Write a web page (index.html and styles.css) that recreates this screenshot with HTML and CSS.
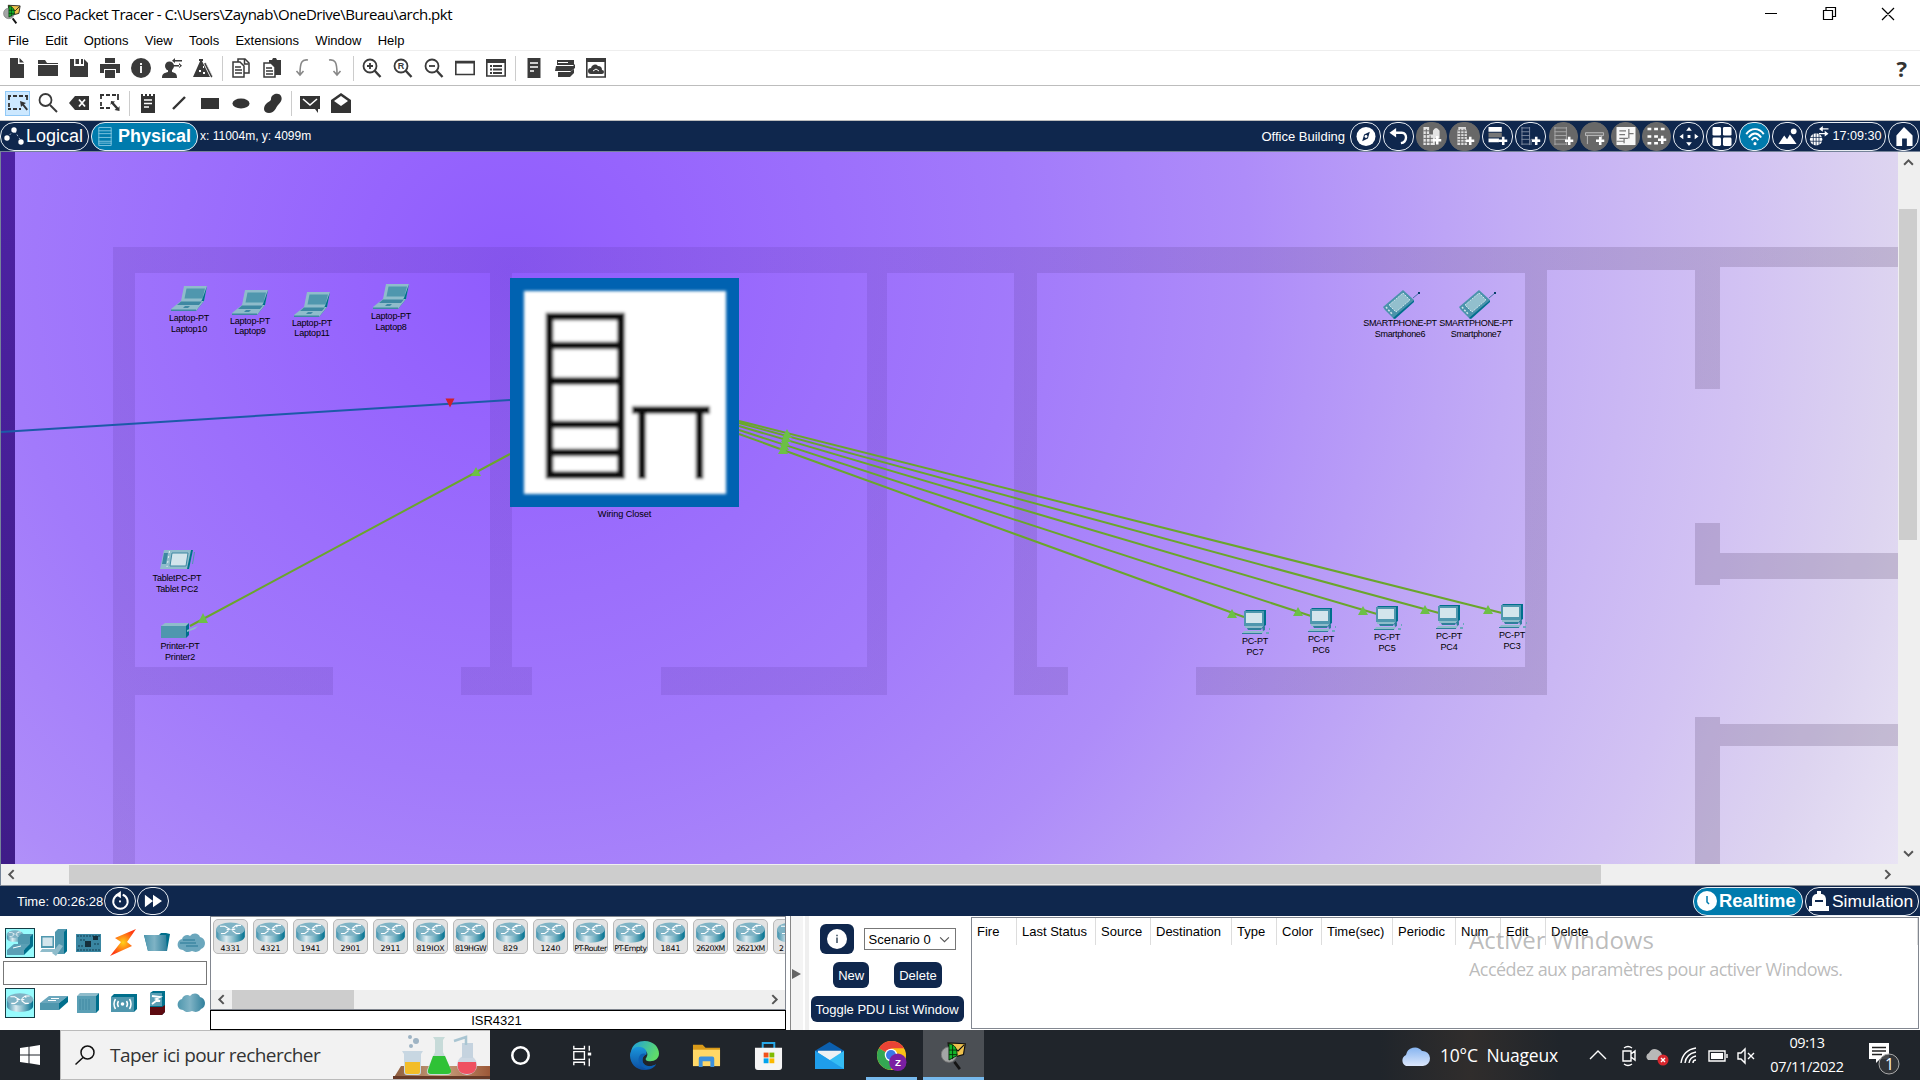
FILE: index.html
```
<!DOCTYPE html>
<html lang="fr">
<head>
<meta charset="utf-8">
<title>Cisco Packet Tracer</title>
<link rel="stylesheet" href="styles.css">
</head>
<body>
<svg class="sprite" aria-hidden="true">
  <defs>
    <linearGradient id="teal" x1="0" y1="0" x2="1" y2="0"><stop offset="0" stop-color="#4f97ae"/><stop offset=".45" stop-color="#7fb3c5"/><stop offset="1" stop-color="#2f7f9b"/></linearGradient>
    <linearGradient id="drum" x1="0" x2="1"><stop offset="0" stop-color="#3d8fab"/><stop offset=".35" stop-color="#dcebf0"/><stop offset="1" stop-color="#00708f"/></linearGradient>
    <linearGradient id="edgeA" x1="0" y1="0" x2="1" y2=".4"><stop offset="0" stop-color="#1b9de2"/><stop offset="1" stop-color="#5fdc6a"/></linearGradient>
    <linearGradient id="edgeB" x1="0" y1="0" x2="0" y2="1"><stop offset="0" stop-color="#1a96dc"/><stop offset="1" stop-color="#0c4da0"/></linearGradient>
    <linearGradient id="cloudy" x1="0" y1="0" x2="0" y2="1"><stop offset="0" stop-color="#86b4f0"/><stop offset="1" stop-color="#dce7fb"/></linearGradient>
    <linearGradient id="shade" x1="0" x2="1"><stop offset="0" stop-color="#3c1e78" stop-opacity=".13"/><stop offset=".4" stop-color="#3c1e78" stop-opacity=".12"/><stop offset=".75" stop-color="#46325a" stop-opacity=".18"/><stop offset="1" stop-color="#46325a" stop-opacity=".2"/></linearGradient>
    <linearGradient id="strip" x1="0" y1="0" x2="0" y2="1"><stop offset="0" stop-color="#4d22a4"/><stop offset="1" stop-color="#3f1c88"/></linearGradient>
    <radialGradient id="spark"><stop offset="0" stop-color="#ffd21a"/><stop offset="1" stop-color="#ff3b12"/></radialGradient>
    <radialGradient id="floor" gradientUnits="userSpaceOnUse" cx="510" cy="120" r="1540">
      <stop offset="0" stop-color="#8f5cfd"/><stop offset=".1" stop-color="#9664fd"/><stop offset=".33" stop-color="#a27afb"/><stop offset=".48" stop-color="#ae8cf9"/><stop offset=".65" stop-color="#c2acf5"/><stop offset=".8" stop-color="#d2c2f3"/><stop offset=".9" stop-color="#ddd4f0"/><stop offset="1" stop-color="#ece8f5"/>
    </radialGradient>
    <filter id="soft" x="-5%" y="-5%" width="110%" height="110%"><feGaussianBlur stdDeviation="1.700"/></filter>
  </defs>
  <symbol id="laptop" viewBox="0 0 36 25">
    <path d="M13 0H36L33 15H10z" fill="#8fbccb"/><path d="M15.500 2.500H34L31.500 12.500H13.500z" fill="#4f97ae"/><path d="M36 0l-3 15-8 10-1-1.500L31 14z" fill="#006f8c"/>
    <path d="M10 15H33L25 25H0v-2z" fill="#8fbccb"/><path d="M10 15.500H31l-3 3.500H6z" fill="#3e88a2"/><path d="M14 20h5l-2 2h-5zM0 23.500h25V25H0z" fill="#3e88a2"/>
  </symbol>
  <symbol id="pc" viewBox="0 0 28 24">
    <path d="M2 2L4 0H24V15l-3 2z" fill="#006f8c"/><path d="M2 1H22V16H2z" fill="#4f97ae"/><path d="M4 3H20V13H4z" fill="#d3e5ec"/><path d="M3 16h18v2H3z" fill="#8fbccb"/><path d="M5 18h15l-1 2H6zM20 17l3-1v4l-2 1z" fill="#2f7f9b"/><path d="M2 21h20l-2 3H0z" fill="#8fbccb"/><path d="M0 23h20v1H0z" fill="#2f7f9b"/><path d="M24 22h3v2h-3zM27 18h1v2h-1z" fill="#6ba7bd"/>
  </symbol>
  <symbol id="phone" viewBox="0 0 37 29">
    <path d="M30 8L36 3" stroke="#175a86" stroke-width=".7"/><path d="M35 2h2v2h-2z" fill="#073f6c"/>
    <path d="M0 17L20 0l11 10-20 19-9-9z" fill="#4a93ab"/><path d="M31 10v2L12 29l-2-1z" fill="#006f8c"/><path d="M6 15L20 3l7 7L13 22z" fill="#92bfcd" stroke="#e4f2f5" stroke-width=".8" stroke-dasharray="2 1"/><path d="M3 17l6 7" stroke="#d3e5ec" stroke-width="1.500" stroke-dasharray="2 1.500"/>
  </symbol>
  <symbol id="tablet" viewBox="0 0 35 19">
    <path d="M4 0H33L29 19H0z" fill="#8fbccb"/><path d="M33 0l-4 19h-2L31 0z" fill="#006f8c"/><path d="M12 3H28L26 16H10z" fill="#d3e5ec" stroke="#3e88a2"/><path d="M4 3h4L6 14H2z" fill="#3e88a2"/><path d="M9.500 1L7 17" stroke="#e8f5f8" stroke-dasharray="2 3"/><path d="M34.500 2l-2 12" stroke="#4f97ae"/>
  </symbol>
  <symbol id="printer" viewBox="0 0 38 15">
    <path d="M0 3L4 0H28L25 3z" fill="#8fbccb"/><path d="M0 3H25V15H0z" fill="#4f97ae"/><path d="M25 3l3-3v12l-3 3z" fill="#006f8c"/><path d="M26 7l11-4-3 3-8 3z" fill="#8fbccb"/>
  </symbol>
  <symbol id="router" viewBox="0 0 32 22">
    <path d="M1 7V15C1 24 31 24 31 15V7z" fill="url(#drum)"/><ellipse cx="16" cy="7.500" rx="15" ry="7" fill="#7fb3c5"/><path d="M5 4.500h5l5 3-3 .5M18 6.500l4-3h5M22 3.500l1 2M14 9l-4 3H6M18 9l4 3h4M17 8l4-.500" stroke="#fff" stroke-width="1.200" fill="none"/>
  </symbol>
  <symbol id="ptlogo" viewBox="0 0 28 32">
    <path d="M8 2L27 3 25 15 10 19z" fill="#eec14d" stroke="#111" stroke-width="1.300"/><path d="M9 3l10 8 7-7" fill="none" stroke="#111" stroke-width="1.300"/><circle cx="9" cy="15" r="8.500" fill="#a3a5a5" stroke="#777"/><path d="M9 3c6 1 9 4 9 13l-9 5z" fill="#12b52a" stroke="#062a08" stroke-width="1"/><path d="M13 4v16M9 10h9M9 15h9" stroke="#052d09"/><path d="M15 23L21 31" stroke="#141414" stroke-width="3"/>
  </symbol>
  <symbol id="plus" viewBox="0 0 10 10"><path d="M3.500 0h3v3.500H10v3H6.500V10h-3V6.500H0v-3h3.500z"/></symbol>
  <symbol id="zoom" viewBox="0 0 20 20"><circle cx="8" cy="8" r="6.500" fill="none" stroke="currentColor" stroke-width="1.800"/><path d="M12.500 12.500L18.500 19" stroke="currentColor" stroke-width="2.400"/></symbol>
</svg>

<header class="titlebar">
  <svg class="applogo"><use href="#ptlogo"/></svg>
  <span class="title">Cisco Packet Tracer - C:\Users\Zaynab\OneDrive\Bureau\arch.pkt</span>
  <svg class="winctl" viewBox="0 0 160 28"><g fill="none" stroke="#000" stroke-width="1.200"><path d="M5 13.500h12M63.500 10.500h9v9h-9zM66 10V7.500h9.500v9H73M122 8l12 12M134 8l-12 12"/></g></svg>
</header>
<nav class="menubar"><span>File</span><span>Edit</span><span>Options</span><span>View</span><span>Tools</span><span>Extensions</span><span>Window</span><span>Help</span></nav>

<div class="toolbar">
  <svg viewBox="0 0 20 20"><path d="M3 0h8v6h6v14H3zM12.500 0L17 4.500h-4.500z"/></svg>
  <svg viewBox="0 0 20 20"><path d="M0 3V2h7l2 3h11v1H0zM0 7h20v11H0z"/></svg>
  <svg viewBox="0 0 20 20"><path d="M1 1h4v7h10V1l4 4v14H1zM6.500 1H10v5H6.500zM12 1h2v5h-2z"/></svg>
  <svg viewBox="0 0 20 20"><path d="M5 0h10v5H5zM0 6h20v9h-4v-4H4v4H0zM5 12h10v8H5z"/></svg>
  <svg viewBox="0 0 20 20"><circle cx="10" cy="10" r="10"/><path d="M9 8h2v7H9zM9 5h2v2H9z" fill="#eee"/></svg>
  <svg viewBox="0 0 20 20"><circle cx="7.500" cy="8" r="4.500"/><path d="M0 20c0-5 3-5 6-6v-3h4v3c3 1 5 1 5 6zM11 2h9v1.500h-9zM13 0v5l-3-2.200zM11 7h7v1.500h-7zM17 5v5l3-2.200z"/></svg>
  <svg viewBox="0 0 20 20"><path d="M8 1l9 18H0zM6 1h4v2H6z"/><path d="M12 5l7 14" stroke="#3a3a3a" stroke-width="2"/><path d="M12 3l8 16" stroke="#fff" stroke-width=".8"/><path d="M6 12h2v2H6zM10 8h1v2h-1zM10 14h2v2h-2z" fill="#fff"/></svg>
  <i class="sep"></i>
  <svg viewBox="0 0 20 20"><g fill="#fff" stroke="#3a3a3a" stroke-width="1.500"><path d="M7 1h7l4 4v10H7z"/><path d="M2 4h7l4 4v11H2z"/></g><path d="M4 9h6M4 12h7M4 15h7M13.500 1v5h4" stroke="#3a3a3a" stroke-width="1.500" fill="none"/></svg>
  <svg viewBox="0 0 20 20"><path d="M7 2h3l1-2h3l1 2h4v15H7z"/><path d="M2 5h7l4 4v10H2z" fill="#fff" stroke="#3a3a3a" stroke-width="1.500"/><path d="M4 10h6M4 13h7M4 16h7" stroke="#3a3a3a" stroke-width="1.500"/></svg>
  <svg viewBox="0 0 20 20"><path d="M15 2C9 1 7 4 7 16M3.500 13L7 17l3.500-4" fill="none" stroke="#888" stroke-width="1.600"/></svg>
  <svg viewBox="0 0 20 20"><path d="M5 2c6-1 8 2 8 14M9.500 13l3.500 4 3.500-4" fill="none" stroke="#888" stroke-width="1.600"/></svg>
  <i class="sep"></i>
  <svg viewBox="0 0 20 20"><use href="#zoom"/><path d="M8 5v6M5 8h6" stroke="#3a3a3a" stroke-width="1.800"/></svg>
  <svg viewBox="0 0 20 20"><use href="#zoom"/><text x="4.800" y="11.200" class="tiny-r">R</text></svg>
  <svg viewBox="0 0 20 20"><use href="#zoom"/><path d="M5 8h6" stroke="#3a3a3a" stroke-width="1.800"/></svg>
  <svg viewBox="0 0 20 20"><path d="M.8 3.500h18.400v13H.8z" fill="none" stroke="#3a3a3a" stroke-width="1.600"/><path d="M0 3h20v2.500H0z"/></svg>
  <svg viewBox="0 0 20 20"><path d="M.8 2h18.400v16H.8z" fill="none" stroke="#3a3a3a" stroke-width="1.600"/><path d="M0 1h20v4H0zM4 7h2v2H4zM7 7h9v2H7zM4 10.500h2v2H4zM7 10.500h9v2H7zM4 14h2v2H4zM7 14h9v2H7z"/></svg>
  <i class="sep"></i>
  <svg viewBox="0 0 20 20"><path d="M3.500 0h13v20h-13z"/><path d="M6 5h8M6 9h8M6 13h4" stroke="#fff" stroke-width="1.600"/></svg>
  <svg viewBox="0 0 20 20"><path d="M2 2h17v5H2zM1 8l3 0h14l2-2v4l-4 3H0zM3 14h12l4-3v4l-4 4H3z"/><path d="M3 4.500h10" stroke="#fff"/></svg>
  <svg viewBox="0 0 20 20"><path d="M.8 1h18.400v18H.8z" fill="none" stroke="#3a3a3a" stroke-width="1.600"/><path d="M0 0h20v4H0zM5 16a3 3 0 0 1 0-6 4 4 0 0 1 7-2 4 4 0 0 1 4 4 2 2 0 0 1 0 4z"/><path d="M7 13l3-2 3 2" stroke="#fff" fill="none"/></svg>
  <span class="help">?</span>
</div>
<div class="toolbar second">
  <span class="picked"><svg viewBox="0 0 20 20"><path d="M0 3h3M5 3h4M11 3h4M17 3h3M1 3v4M1 10v4M0 16h3M5 16h4M11 16h2M19 3v4" stroke="#333" stroke-width="1.800"/><path d="M12 8l6 2-2 1.200 4 5-1.500 1.300-4-5-1.500 1.500z"/></svg></span>
  <svg viewBox="0 0 20 20"><circle cx="7.500" cy="7" r="6" fill="none" stroke="#3a3a3a" stroke-width="1.800"/><path d="M12 12l7 7" stroke="#3a3a3a" stroke-width="2"/></svg>
  <svg viewBox="0 0 20 20"><path d="M0 10l6-7h14v14H6z"/><path d="M10 6.500l6 7M16 6.500l-6 7" stroke="#fff" stroke-width="1.800"/></svg>
  <svg viewBox="0 0 20 20"><path d="M0 2h4M6 2h4M12 2h4M1 2v4M1 9v4M0 15h4M6 15h4M18 1v6" stroke="#333" stroke-width="1.800"/><path d="M11 8l4 .5-1.200 1.200 4.500 5L19.500 13v5l-5-1 1.500-1.300-4.500-5-1 1.300z"/></svg>
  <i class="sep"></i>
  <svg viewBox="0 0 20 20"><path d="M3 1h2v2h2V1h2v2h2V1h2v2h2V1h2v19H3z"/><path d="M6 7h8M6 10.500h8M6 14h5" stroke="#fff" stroke-width="1.500"/></svg>
  <svg viewBox="0 0 20 20"><path d="M4 16L16 4" stroke="#333" stroke-width="2.400"/></svg>
  <svg viewBox="0 0 20 20"><path d="M1 5h18v11H1z"/></svg>
  <svg viewBox="0 0 20 20"><ellipse cx="10" cy="10.500" rx="8.500" ry="5"/></svg>
  <svg viewBox="0 0 20 20"><path d="M9 6c0-5 8-7 10-3s-1 7-3 9-3 8-9 8-6-6-3-9 5-3 5-5z"/></svg>
  <i class="sep"></i>
  <svg viewBox="0 0 20 20"><path d="M0 3h20v13h-2v4l-3-4H0z"/><path d="M3 6l7 6 7-6" stroke="#fff" stroke-width="1.600" fill="none"/></svg>
  <svg viewBox="0 0 20 20"><path d="M0 7l10-7 10 7v13H0z"/><path d="M3 8l7-5 7 5-7 5z" fill="#fff"/></svg>
</div>

<div class="navbar">
  <div class="pill logical"><svg viewBox="0 0 20 20"><path d="M3 12L10 4l7 11" stroke="#9fb0c8" stroke-dasharray="2 2" fill="none"/><g fill="#fff"><circle cx="3" cy="12" r="2.700"/><circle cx="10" cy="4" r="2.700"/><circle cx="17" cy="16" r="2.700"/></g></svg>Logical</div>
  <div class="pill physical"><svg viewBox="0 0 14 20"><path d="M.5.5h13v19H.5zM0 4h14M0 7h14M0 11h14M0 15h14M0 17h14" fill="none" stroke="#7fc4de"/></svg>Physical</div>
  <span class="coords">x: 11004m, y: 4099m</span>
  <span class="place">Office Building</span>
  <div class="rounds">
    <b><svg viewBox="0 0 20 20"><circle cx="10" cy="10" r="10"/><path d="M14 5l-2 7-6 3 2-7z" fill="#0f274d"/><circle cx="10" cy="10" r="1.500"/></svg></b>
    <b><svg viewBox="0 0 20 20"><path d="M4 6h9c6 0 6 10-1 11" fill="none" stroke="#fff" stroke-width="2.500"/><path d="M0 6l7-5v10z"/></svg></b>
    <b class="off"><svg viewBox="0 0 20 20"><path d="M1 0h6v8h4V4q3-6 7 0v8h-5v7H1z" fill="#e4e4e4"/><path d="M1 4h6M1 8h6M1 12h10M1 16h10M4 2v17M8 9v10" stroke="#666" stroke-width="1"/><use href="#plus" x="11" y="9" width="9" height="10"/></svg></b>
    <b class="off"><svg viewBox="0 0 20 20"><path d="M3 0h8v3h1v16H2V3h1z" fill="#ddd"/><path d="M2 4h10M2 7h10M2 10h10M2 13h10M2 16h10M5.500 2v17M9 2v17" stroke="#666"/><use href="#plus" x="11" y="10" width="9" height="9"/></svg></b>
    <b><svg viewBox="0 0 20 20"><path d="M0 0h14v5H0zM0 12h11v4H0z"/><path d="M0 6h14v5H0z" fill="#777"/><use href="#plus" x="11" y="10" width="9" height="9"/></svg></b>
    <b><svg viewBox="0 0 20 20"><path d="M.5 0v19M8.500 0v19M0 1h9M0 5h9M0 9h9M0 13h9M0 18h9M10 13h9M10 13v6" stroke="#7d8aa0" fill="none"/><use href="#plus" x="11" y="10" width="9" height="9"/></svg></b>
    <b class="off slim shift"><svg viewBox="0 0 20 20"><path d="M.5 0v19M12.500 0v19M0 1h13M0 5h13M0 9h13M0 13h13M0 18h13" stroke="#aaa" fill="none"/><use href="#plus" x="11" y="10" width="9" height="9"/></svg></b>
    <b class="off slim"><svg viewBox="0 0 20 20"><path d="M0 6h19v3H0zM2 9v9M17 9v4" fill="#777" stroke="#bbb"/><use href="#plus" x="11" y="10" width="9" height="9"/></svg></b>
    <b class="off slim"><svg viewBox="0 0 20 20"><path d="M0 0h20v19H0z" opacity=".95"/><path d="M3 4h7M13 2v10M3 8h6M13 7h5M3 12h9M0 15h8M8 12v5" stroke="#777" stroke-width="1.300"/></svg></b>
    <b class="off slim"><svg viewBox="0 0 20 20"><path d="M0 2h18M0 10h11M0 17h11" stroke="#fff" stroke-width="2.600" stroke-dasharray="4 3"/><use href="#plus" x="11" y="9" width="9" height="9"/></svg></b>
    <b><svg viewBox="0 0 20 20"><path d="M10 0l3 4H7zM10 20l3-4H7zM0 10l4-3v6zM20 10l-4-3v6zM8.500 8.500h3v3h-3z"/></svg></b>
    <b><svg viewBox="0 0 20 20"><rect width="9" height="9" rx="1.500"/><rect x="11" width="9" height="9" rx="1.500"/><rect y="11" width="9" height="9" rx="1.500"/><rect x="11" y="11" width="9" height="9" rx="1.500"/></svg></b>
    <b class="on"><svg viewBox="0 0 20 20"><g fill="none" stroke="#fff" stroke-width="2"><path d="M.8 7.500c5-7 13.400-7 18.400 0M3.500 11c4-5.500 9-5.500 13 0M6.500 14c2.500-3.500 4.500-3.500 7 0"/></g><circle cx="10" cy="17.500" r="1.600"/></svg></b>
    <b><svg viewBox="0 0 20 20"><path d="M0 18L6 9l3 4 3-5 7 10z"/><circle cx="16" cy="4.500" r="3"/></svg></b>
    <b class="clock"><svg viewBox="0 0 20 20"><circle cx="7" cy="13" r="6.500"/><path d="M7 6v14M0 11h14M0 15h14M4 7v12M10 7v12" stroke="#0f274d" stroke-width=".8"/><path d="M12 2h8M10 7h8" stroke="#fff" stroke-width="1.500"/><path d="M10 2l4-3v6zM20 7l-4-3v6z"/></svg>17:09:30</b>
    <b><svg viewBox="0 0 20 20"><path d="M10 0l9 9v11h-6v-8H8v8H2V9z"/></svg></b>
  </div>
</div>

<main class="viewport">
  <div class="scene">
    <svg class="plan" viewBox="0 0 1897 712">
      <rect width="1897" height="712" fill="url(#floor)"/>
      <path fill="url(#shade)" d="M112 95H1897V115H1719V237H1694V118H1546V543H1195V515H1524V121H1036V515H1067V543H1013V121H886V543H660V515H866V121H511V515H531V543H460V515H489V121H134V515H332V543H134V712H112z"/>
      <path class="walls" d="M1694 371h25v30h178v26H1719v6h-25zM1694 565h25v7h178v22H1719v118h-25z"/>
      <rect width="14" height="712" fill="url(#strip)"/>
      <g fill="none" stroke="#6aa62b" stroke-width="2"><path d="M509 302L189 474M738 269L1501 461M738 271L1438 461M738 274L1376 462M738 278L1310 464M738 282L1243 465"/><path d="M0 280L509 248" stroke="#1c5aa8"/></g>
      <path d="M444.500 246.500h9l-4.500 9z" fill="#d0202b"/>
      <path class="up" d="M470 324l5-9 5 9zM197 471l5-10 5 10zM1226 466l5-9 5 9zM1292 464l5-9 5 9zM1357 463l5-9 5 9zM1419 462l5-9 5 9zM1482 462l5-9 5 9zM781 286l5-9 5 9zM780 290l5-9 5 9zM779 294l5-9 5 9zM778 298l5-9 5 9zM777 302l5-9 5 9z"/>
    </svg>
    <div class="closet">
      <svg viewBox="0 0 229 229"><g filter="url(#soft)"><path d="M14 13H216V216H14z" fill="#fff"/><path d="M39.500 38.500H111V197H39.500zM39 67.500h72M39 103h72M39 146.500h72M39 174.500h72M122 132h78M132 132v69M189.500 132v69" fill="none" stroke="#101010" stroke-width="7.500"/></g></svg>
      <span>Wiring Closet</span>
    </div>
    <div class="node laptop" style="left:188px;top:134px"><svg><use href="#laptop"/></svg><span>Laptop-PT</span><span>Laptop10</span></div>
    <div class="node laptop tight" style="left:249px;top:138px"><svg><use href="#laptop"/></svg><span>Laptop-PT</span><span>Laptop9</span></div>
    <div class="node laptop tight" style="left:311px;top:140px"><svg><use href="#laptop"/></svg><span>Laptop-PT</span><span>Laptop11</span></div>
    <div class="node laptop" style="left:390px;top:132px"><svg><use href="#laptop"/></svg><span>Laptop-PT</span><span>Laptop8</span></div>
    <div class="node tablet" style="left:176px;top:398px"><svg><use href="#tablet"/></svg><span>TabletPC-PT</span><span>Tablet PC2</span></div>
    <div class="node printer" style="left:179px;top:471px"><svg><use href="#printer"/></svg><span>Printer-PT</span><span>Printer2</span></div>
    <div class="node phone" style="left:1399px;top:138px"><svg><use href="#phone"/></svg><span>SMARTPHONE-PT</span><span>Smartphone6</span></div>
    <div class="node phone" style="left:1475px;top:138px"><svg><use href="#phone"/></svg><span>SMARTPHONE-PT</span><span>Smartphone7</span></div>
    <div class="node pc" style="left:1254px;top:458px"><svg><use href="#pc"/></svg><span>PC-PT</span><span>PC7</span></div>
    <div class="node pc" style="left:1320px;top:456px"><svg><use href="#pc"/></svg><span>PC-PT</span><span>PC6</span></div>
    <div class="node pc" style="left:1386px;top:454px"><svg><use href="#pc"/></svg><span>PC-PT</span><span>PC5</span></div>
    <div class="node pc" style="left:1448px;top:453px"><svg><use href="#pc"/></svg><span>PC-PT</span><span>PC4</span></div>
    <div class="node pc" style="left:1511px;top:452px"><svg><use href="#pc"/></svg><span>PC-PT</span><span>PC3</span></div>
  </div>
  <div class="vscroll"><svg viewBox="0 0 10 10"><path d="M1 7l4-4 4 4"/></svg><i></i><svg viewBox="0 0 10 10"><path d="M1 3l4 4 4-4"/></svg></div>
  <div class="hscroll"><svg viewBox="0 0 10 10"><path d="M7 1L3 5l4 4"/></svg><i></i><svg viewBox="0 0 10 10"><path d="M3 1l4 4-4 4"/></svg></div>
</main>

<div class="timebar">
  <span>Time: 00:26:28</span>
  <b><svg viewBox="0 0 20 20"><path d="M8 3a8 8 0 1 0 5 0" fill="none" stroke="#fff" stroke-width="2.200"/><path d="M5 3l6-4v8z"/><circle cx="10" cy="10.500" r="1.200"/></svg></b>
  <b><svg viewBox="0 0 20 20"><path d="M1 3l9 7-9 7zM10 3l10 7-10 7z"/></svg></b>
  <div class="pill real"><svg viewBox="0 0 20 20"><circle cx="10" cy="10" r="10" fill="#fff"/><path d="M10 5v6l2 2" stroke="#007bad" stroke-width="1.500" fill="none"/></svg>Realtime</div>
  <div class="pill simu"><svg viewBox="0 0 20 20" fill="#fff"><path d="M3 9C3 4 6 3 8 3V0h4v3c3 0 5 2 5 6v6h3v5H0v-5h3zM6 9v2h8V9z" fill-rule="evenodd"/></svg>Simulation</div>
</div>

<section class="dock">
  <div class="categories">
    <div class="cats">
      <i class="sel"><svg viewBox="0 0 30 30"><use href="#router" x="1" y="2" width="18" height="12"/><path d="M13 9l3-3h12v12l-3 3H13z" fill="#4f97ae"/><path d="M28 6v12l-3 3V9z" fill="#006f8c"/><path d="M2 22l7-6h16l-6 6zM2 22h17v5H2z" fill="#5a9fb5"/><path d="M19 22l6-6v5l-6 6z" fill="#006f8c"/><path d="M8 20l8-2" stroke="#fff"/></svg></i>
      <i><svg viewBox="0 0 30 30"><path d="M16 4l3-3h9v22l-3 3h-9z" fill="#4f97ae"/><path d="M28 1v22l-3 3V4z" fill="#006f8c"/><path d="M2 8h13v12H2z" fill="#4f97ae"/><path d="M3.500 9.500h10v8.500h-10z" fill="#d3e5ec"/><path d="M3 21h14l-2 3H1zM13 25l7-9 4 2-7 10z" fill="#8fbccb"/></svg></i>
      <i><svg viewBox="0 0 30 30"><path d="M3 6h25v18H3z" fill="#3a86a2"/><path d="M4 8h23M4 22h23M7 12h5M21 16h6M5 18h5" stroke="#123f52" stroke-dasharray="2 1"/><path d="M12 13h6v6h-6zM20 8h5v4h-5z" fill="#152f3c"/></svg></i>
      <i><svg viewBox="0 0 30 30"><path d="M28 1L7 10l6 4-11 14 22-10-5-4z" fill="url(#spark)"/></svg></i>
      <i><svg viewBox="0 0 30 30"><path d="M2 7h15l2-2h5l4 1-3 17H6z" fill="#006f8c"/><path d="M2 7h22l1 16H6z" fill="url(#teal)"/></svg></i>
      <i><svg viewBox="0 0 30 30"><path d="M7 22c-7 0-7-10-1-11 1-4 6-5 8-3 3-4 9-3 10 1 6 1 7 10 1 12-3 4-7 3-9 2-4 2-7 1-9-1z" fill="#6ba7bd"/><path d="M7 12h12M4 15h16M10 18h12" stroke="#3e88a2" stroke-width="1.500"/></svg></i>
    </div>
    <div class="field"></div>
    <div class="cats">
      <i class="sel"><svg viewBox="0 0 30 30"><use href="#router" x="1" y="4" width="28" height="21"/></svg></i>
      <i><svg viewBox="0 0 30 30"><path d="M1 15l9-7h19l-9 7z" fill="#6ba7bd"/><path d="M1 15h19v7H1z" fill="#4f97ae"/><path d="M20 15l9-7v6l-9 8z" fill="#006f8c"/><path d="M9 12.500h8M12 10.500h8" stroke="#fff"/></svg></i>
      <i><svg viewBox="0 0 30 30"><path d="M4 8l3-3h19l-3 3z" fill="#8fbccb"/><path d="M4 8h19v17H4z" fill="#5a9fb5"/><path d="M26 5v17l-3 3V8z" fill="#006f8c"/><path d="M7 11v11M10 11v11M13 11v11M16 11v11" stroke="#3e88a2"/></svg></i>
      <i><svg viewBox="0 0 30 30"><path d="M3 9l3-3h23v15l-3 3z" fill="#006f8c"/><path d="M3 9h23v15H3z" fill="#4f97ae"/><circle cx="14.500" cy="16" r="1.800" fill="#fff"/><path d="M10.500 13q-2 3 0 6M7.500 11q-3 5 0 10M18.500 13q2 3 0 6M21.500 11q3 5 0 10" stroke="#fff" fill="none" stroke-width="1.500"/></svg></i>
      <i><svg viewBox="0 0 30 30"><path d="M8 5l3-2h12v21l-3 3H8z" fill="#006f8c"/><path d="M8 5h12v13H8z" fill="#5a9fb5"/><path d="M8 19h12l3-2v7l-3 3H8z" fill="#5d0a10"/><path d="M10 8l8 1-4 2 4 2h-4l-4 3" stroke="#fff" stroke-width="1.800" fill="none"/></svg></i>
      <i><svg viewBox="0 0 30 30"><path d="M7 22c-7 0-7-10-1-11 1-4 6-5 8-3 3-4 9-3 10 1 6 1 7 10 1 12-3 4-7 3-9 2-4 2-7 1-9-1z" fill="url(#teal)"/></svg></i>
    </div>
  </div>
  <div class="models">
    <div class="shelf">
      <div class="tiles">
        <p><svg><use href="#router"/></svg>4331</p><p><svg><use href="#router"/></svg>4321</p><p><svg><use href="#router"/></svg>1941</p><p><svg><use href="#router"/></svg>2901</p><p><svg><use href="#router"/></svg>2911</p><p><svg><use href="#router"/></svg>819IOX</p><p class="dense"><svg><use href="#router"/></svg>819HGW</p><p><svg><use href="#router"/></svg>829</p><p><svg><use href="#router"/></svg>1240</p><p class="dense"><svg><use href="#router"/></svg>PT-Router</p><p class="dense"><svg><use href="#router"/></svg>PT-Empty</p><p><svg><use href="#router"/></svg>1841</p><p class="dense"><svg><use href="#router"/></svg>2620XM</p><p class="dense"><svg><use href="#router"/></svg>2621XM</p><p class="cut"><svg><use href="#router"/></svg><span>2</span></p>
      </div>
      <div class="hscroll small"><svg viewBox="0 0 10 10"><path d="M7 1L3 5l4 4"/></svg><i></i><svg viewBox="0 0 10 10"><path d="M3 1l4 4-4 4"/></svg></div>
    </div>
    <div class="modelname">ISR4321</div>
  </div>
  <div class="splitter"><svg viewBox="0 0 9 10"><path d="M0 0l9 5-9 5z" fill="#666"/></svg></div>
  <div class="scenario">
    <div class="row first"><button class="info"><svg viewBox="0 0 20 20"><circle cx="10" cy="10" r="10" fill="#fff"/><path d="M9.200 8.500h1.600V14H9.200zM9.200 5.800h1.600v1.500H9.200z" fill="#456"/></svg></button><div class="combo">Scenario 0<svg viewBox="0 0 10 10"><path d="M1 3l4 4 4-4" fill="none" stroke="#555"/></svg></div></div>
    <div class="row second-row"><button>New</button><button>Delete</button></div>
    <div class="row"><button class="toggle">Toggle PDU List Window</button></div>
  </div>
  <div class="pdu">
    <div class="cols"><span>Fire</span><span>Last Status</span><span>Source</span><span>Destination</span><span>Type</span><span>Color</span><span>Time(sec)</span><span>Periodic</span><span>Num</span><span>Edit</span><span class="last">Delete</span></div>
    <div class="watermark"><strong>Activer Windows</strong><em>Accédez aux paramètres pour activer Windows.</em></div>
  </div>
</section>

<footer class="taskbar">
  <div class="start"><svg viewBox="0 0 20 20"><path d="M0 3l8.500-1.200v7.700H0zM9.500 1.700L20 0v9.500H9.500zM0 10.500h8.500v7.700L0 17zM9.500 10.500H20V20L9.500 18.300z" fill="#fff"/></svg></div>
  <div class="search">
    <svg class="glass" viewBox="0 0 20 20"><circle cx="12.500" cy="7.500" r="6.500" fill="none" stroke="#111" stroke-width="1.500"/><path d="M8 12.500L.5 19.500" stroke="#111" stroke-width="1.500"/></svg>
    <span>Taper ici pour rechercher</span>
    <svg class="lab" viewBox="0 0 97 48">
      <defs><linearGradient id="wood" x1="0" x2="1"><stop offset="0" stop-color="#8d5b3c"/><stop offset=".5" stop-color="#c9a07e"/><stop offset="1" stop-color="#9c5838"/></linearGradient></defs>
      <path d="M8 35H97V48H0z" fill="url(#wood)"/><path d="M0 45H97V48H0z" fill="#673a28"/>
      <path d="M9 20h21l-2 3v18q0 3-3 3H14q-3 0-3-3V23z" fill="#c8d7e2"/><path d="M12 31h15v10q0 2-2 2H14q-2 0-2-2z" fill="#f3bd28"/>
      <path d="M40 6h12l-2 3v12l8 18q1 5-4 5H38q-5 0-4-5l8-18V9z" fill="#c7dbd9"/><path d="M40 25h12l6 14q1 4-4 4H38q-4 0-3-4z" fill="#2fc236"/>
      <circle cx="74" cy="34" r="10" fill="#cdd8e3"/><path d="M69 12h11v15H69z" fill="#c5d3df"/><path d="M65 31h18q2 12-9 12T65 31z" fill="#ef5060"/><path d="M61 10l12-4v8" fill="none" stroke="#a9c5d2" stroke-width="2.500"/>
      <g fill="#9fb4c4"><circle cx="17" cy="6" r="2"/><circle cx="23" cy="10" r="3"/><circle cx="18" cy="15" r="2"/></g>
    </svg>
  </div>
  <div class="apps">
    <i><svg viewBox="0 0 30 30"><circle cx="15" cy="15" r="8.500" fill="none" stroke="#fff" stroke-width="2.600"/></svg></i>
    <i><svg viewBox="0 0 30 30"><path d="M6 5v3h11V5M6 25v-3h11v3M6 11h11v8H6zM22 5v5M22 18v8" fill="none" stroke="#fff" stroke-width="1.400"/><path d="M20.500 12h3.500v3h-3.500z" fill="#fff"/></svg></i>
    <i><svg viewBox="0 0 30 30"><path d="M1 12C2 3 9 0 15 0c10 0 15 7 15 13 0 5-4 8-9 8-4 0-6-2-4-4 3-5-1-8-6-8-5 0-8 1-10 3z" fill="url(#edgeA)"/><path d="M0 15c0-6 5-9 9-9 6 0 9 4 8 8-6 2-6 12 3 12 3 0 5-1 7-2-3 5-8 6-12 6C6 30 0 23 0 15z" fill="url(#edgeB)"/><path d="M11 14c-5 5-1 13 6 15 4 0 8-2 10-5-6 4-15 2-14-6 0-2 2-4 4-4-2-2-4-1-6 0z" fill="#0d5fb2"/></svg></i>
    <i><svg viewBox="0 0 30 30"><path d="M1 4h10l3 3h15v18H1z" fill="#d99a19"/><path d="M1 9h28v17H1z" fill="#ffd867"/><path d="M7 27v-9q0-2 2-2h12q2 0 2 2v9h-4v-6h-8v6z" fill="#3b90dd"/></svg></i>
    <i><svg viewBox="0 0 30 30"><path d="M9 8V2h12v6" fill="none" stroke="#27a8e8" stroke-width="2"/><path d="M1 7h28v20q0 3-3 3H4q-3 0-3-3z" fill="#f5f5f5"/><path d="M10 12h5v5h-5z" fill="#f1511b"/><path d="M16 12h5v5h-5z" fill="#80bb01"/><path d="M10 18h5v5h-5z" fill="#00a3ee"/><path d="M16 18h5v5h-5z" fill="#fbb900"/></svg></i>
    <i><svg viewBox="0 0 30 30"><path d="M0 10L15 1l15 9v4H0z" fill="#0b5fae"/><path d="M3 10h24v6l-12 7L3 16z" fill="#eef1f4"/><path d="M0 10l15 10L30 10v19H0z" fill="#35bdf5"/><path d="M0 10l30 19H0z" fill="#1f9dea"/></svg></i>
    <i class="run"><svg viewBox="0 0 30 30"><circle cx="15" cy="15" r="15" fill="#fbc116"/><path d="M15 15L2 7.500A15 15 0 0 1 28 7.500H15z" fill="#ea4335"/><path d="M15 15L2 7.500A15 15 0 0 0 14 30l6-11z" fill="#34a853"/><circle cx="14.500" cy="14.500" r="6.500" fill="#fff"/><circle cx="14.500" cy="14.500" r="5.200" fill="#3b78e7"/><circle cx="21.500" cy="22" r="9" fill="#7a1fa2"/><text x="18.500" y="26" class="zed">Z</text></svg></i>
    <i class="run active"><svg viewBox="0 0 30 32"><use href="#ptlogo" x="1" y="0" width="28" height="32"/></svg></i>
  </div>
  <div class="tray">
    <svg class="w-cloud" viewBox="0 0 30 21"><path d="M6 21a6 6 0 0 1 0-11A9 9 0 0 1 22 6a7.500 7.500 0 0 1 1 15z" fill="url(#cloudy)"/></svg>
    <span class="weather">10°C&nbsp; Nuageux</span>
    <svg class="trayicons" viewBox="0 0 170 30"><g fill="none" stroke="#fff" stroke-width="1.400">
      <path d="M1 19l8-8 8 8M34 11h8v10h-8zM42 14l4-3v9l-4-3M35 8q4-3 8 0M35 24q4 3 8 0"/>
      <path d="M92 23Q94 10 107 8M96 23Q97 14 107 12M100 23Q101 17 107 16M104 23q0-3 3-3"/><path d="M120 11h16v10h-16zM138 14v4"/><path d="M149 13h3l4-4v14l-4-4h-3zM159 13l6 6M165 13l-6 6"/></g>
      <path d="M122 13h12v6h-12z" fill="#fff"/><path d="M59 20a4 4 0 0 1 1-7q3-6 9-3 4 2 4 6v4z" fill="#b8b8b8"/><circle cx="74" cy="20" r="5.500" fill="#d6272e"/><path d="M72 18l4 4M76 18l-4 4" stroke="#fff" stroke-width="1.400"/></svg>
    <div class="date"><span>09:13</span><span>07/11/2022</span></div>
    <svg class="notif" viewBox="0 0 32 34"><path d="M1 1h20v16h-9l-4 4v-4H1z" fill="#fff"/><path d="M4 5.500h14M4 9h14M4 12.500h10" stroke="#222" stroke-width="1.300"/><circle cx="21" cy="22" r="10" fill="#33363a" fill-opacity=".9" stroke="#aaa"/><text x="17" y="28" class="one">1</text></svg>
  </div>
</footer>
</body>
</html>
```
FILE: styles.css
```
* { box-sizing: border-box; }
body { margin: 0; width: 1920px; height: 1080px; overflow: hidden; background: #fff; color: #000; font: 13px "Liberation Sans", Arial, sans-serif; display: flex; flex-direction: column; }
i { font-style: normal; }
svg { display: block; flex: none; overflow: visible; }
.sprite { position: absolute; width: 0; height: 0; }

.titlebar { height: 30px; flex: none; display: flex; align-items: flex-start; padding: 0 0 0 3px; font: 15px/28px "Open Sans", sans-serif; }
.applogo { width: 18px; height: 20px; margin: 4px 6px 0 0; }
.title { letter-spacing: -.46px; white-space: nowrap; }
.winctl { width: 160px; height: 28px; margin: 0 0 0 auto; }
.menubar { height: 21px; flex: none; display: flex; gap: 16.2px; padding: 0 8px; line-height: 22px; border-bottom: 1px solid #eee; }

.toolbar { height: 35px; flex: none; display: flex; align-items: center; gap: 11px; padding-left: 7px; border-bottom: 1px solid #bdbdbd; fill: #3a3a3a; color: #3a3a3a; }
.toolbar svg { width: 20px; height: 20px; }
.sep { width: 1px; height: 25px; background: #ccc; margin: 0 -2.5px; }
.second { fill: #333; }
.picked { width: 25px; height: 25px; margin: 0 -3px 0 -2px; background: #cce8ff; border: 1px solid #91c9f7; display: grid; place-items: center; }
.tiny-r { font: bold 9px "Liberation Sans", sans-serif; }
.help { margin: 0 13px 0 auto; font: bold 22px "Open Sans", sans-serif; color: #333; }

.navbar { height: 31px; flex: none; background: #0f274d; display: flex; align-items: center; color: #fff; border-bottom: 1px solid #758399; }
.pill { height: 29px; border: 1px solid #e8edf3; border-radius: 14px; display: flex; align-items: center; font-size: 18px; white-space: nowrap; }
.logical { width: 89px; padding-left: 3px; gap: 2px; }
.logical svg { width: 20px; height: 20px; }
.physical { width: 107px; margin-left: 2px; padding-left: 6px; gap: 6px; background: #007bad; font-weight: bold; }
.physical svg { width: 14px; height: 19px; }
.coords { margin-left: 2px; font-size: 12px; }
.place { margin-left: auto; margin-right: 5px; }
.rounds { display: flex; gap: 2px; fill: #fff; padding-right: 1px; }
.rounds b { width: 31px; height: 29px; border: 1px solid #e8edf3; border-radius: 14px; display: flex; align-items: center; justify-content: center; font-weight: normal; }
.rounds svg { width: 20px; height: 19px; }
.rounds .off { background: #686868; border-color: #686868; }
.rounds .slim { width: 29px; }
.rounds .shift { margin-left: 1px; }
.rounds .on { background: #007bad; }
.rounds .clock { width: 81px; gap: 3px; font-size: 12.6px; }

.viewport { height: 734px; flex: none; display: grid; grid-template: 713px 21px / 1897px 22px; border-left: 1px solid #758399; border-bottom: 1px solid #8a8f98; background: #efefef; }
.scene { position: relative; width: 1897px; height: 713px; overflow: hidden; }
.plan { width: 1897px; height: 712px; }
.walls { fill: #46325a; fill-opacity: .2; }
.up { fill: #6cc046; }
.closet { position: absolute; left: 509px; top: 126px; width: 229px; height: 229px; background: #0062b1; }
.closet svg { width: 229px; height: 229px; }
.closet span { display: block; text-align: center; font-size: 9.2px; line-height: 15px; letter-spacing: -.1px; }
.node { position: absolute; width: 90px; margin-left: -45px; display: flex; flex-direction: column; align-items: center; font-size: 9px; line-height: 11px; letter-spacing: -.2px; white-space: nowrap; }
.node span { width: max-content; }
.node svg { margin-bottom: 2px; }
.laptop svg { width: 36px; height: 25px; }
.tight svg { margin-bottom: 1px; }
.tight span:last-child { margin-top: -1px; }
.pc svg { width: 28px; height: 24px; margin-left: 2px; }
.phone svg { width: 37px; height: 29px; margin-bottom: -1px; margin-left: 2px; }
.phone { letter-spacing: -.33px; line-height: 10.5px; }
.tablet svg { width: 35px; height: 19px; margin-bottom: 4px; }
.printer svg { width: 38px; height: 15px; margin-bottom: 3px; }

.vscroll { width: 20px; background: #efefef; display: flex; flex-direction: column; align-items: center; padding-top: 5px; }
.vscroll svg, .hscroll svg { width: 11px; height: 11px; fill: none; stroke: #555; stroke-width: 1.8; }
.vscroll i { width: 18px; height: 331px; margin-top: 41px; background: #cdcdcd; }
.vscroll svg:last-child { margin-top: auto; margin-bottom: 6px; }
.hscroll { height: 19px; margin-top: 0; display: flex; align-items: center; padding: 0 5px; background: #efefef; }
.viewport > .hscroll i { width: 1532px; height: 19px; margin-left: 52px; background: #cdcdcd; }
.hscroll svg:last-child { margin-left: auto; }

.timebar { height: 30px; flex: none; background: #0f274d; color: #fff; display: flex; align-items: center; padding-left: 17px; fill: #fff; }
.timebar span { width: 87px; white-space: nowrap; }
.timebar b { width: 32px; height: 28px; border: 1px solid #e8edf3; border-radius: 14px; display: grid; place-items: center; margin-right: 1px; }
.timebar b svg { width: 18px; height: 18px; }
.real { width: 110px; margin-left: auto; background: #007bad; font-weight: bold; font-size: 18.4px; padding-left: 3px; gap: 2px; }
.simu { width: 114px; margin: 0 1px 0 2px; font-size: 17.4px; padding-left: 3px; gap: 3px; }
.pill.real svg, .pill.simu svg { width: 20px; height: 20px; }

.dock { height: 114px; flex: none; display: flex; }
.categories { width: 210px; padding: 12px 3px 0; }
.cats { display: flex; gap: 4.2px; padding-left: 2px; }
.cats i { width: 30px; height: 30px; }
.cats .sel { background: #97fbfd; box-shadow: inset 0 0 0 1px #153c44; }
.cats svg { width: 30px; height: 30px; }
.field { height: 24px; margin: 3px 0; border: 1px solid #777; }
.models { width: 576px; }
.shelf { height: 94px; border: 1px solid #828790; overflow: hidden; display: flex; flex-direction: column; justify-content: space-between; }
.tiles { display: flex; gap: 5px; padding: 2px 2px 0; }
.tiles p { margin: 0; width: 35px; height: 35px; flex: none; background: #e3e3e3; border: 1px solid #b9b9b9; border-radius: 5px; font: 7.8px/9px "DejaVu Sans", sans-serif; display: flex; flex-direction: column; align-items: center; white-space: nowrap; }
.tiles svg { width: 31px; height: 21px; margin: 2px 0 1px; }
.tiles .dense { letter-spacing: -.55px; }
.tiles .cut { align-items: flex-start; padding-left: 2px; }
.cut span { padding-left: 3px; }
.small i { width: 122px; height: 19px; margin-left: 5px; background: #cdcdcd; }
.small svg { margin-top: -1px; }
.modelname { height: 20px; border: 1px solid #000; text-align: center; line-height: 19px; padding-right: 3px; }
.splitter { width: 21px; margin-left: 4px; padding: 53px 0 0 1px; border-left: 1px solid #888; background: linear-gradient(90deg, #f4f4f4 12px, #fff 12px, #fff 14px, #efefef 14px, #efefef 18px, #fff 18px); }
.splitter svg { width: 9px; height: 10px; }
.scenario { width: 160px; display: flex; flex-direction: column; align-items: center; padding-top: 8px; gap: 8px; margin-left: -4px; }
.row { display: flex; align-items: center; }
.first { gap: 10px; padding-left: 1px; }
.second-row { gap: 25px; padding-left: 1px; }
.scenario button { height: 26px; border: 0; border-radius: 6px; background: #0f274d; color: #fff; font: 13px "Liberation Sans", sans-serif; padding: 0 5px; }
.scenario .info { width: 34px; height: 30px; padding: 0 7px; }
.info svg { width: 20px; height: 20px; }
.combo { width: 92px; height: 22px; border: 1px solid #777; display: flex; align-items: center; justify-content: space-between; padding: 0 5px 0 4px; white-space: nowrap; }
.combo svg { width: 11px; height: 11px; }
.scenario .toggle { width: 153px; white-space: nowrap; }
.pdu { flex: none; width: 948px; height: 112px; margin: 1px 0 0 4px; border: 1px solid #828790; position: relative; }
.cols { display: grid; grid-template-columns: 45px 79px 55px 81px 45px 45px 71px 63px 45px 45px 1fr; height: 26px; line-height: 27px; }
.cols span { padding-left: 5px; border-right: 1px solid #ddd; white-space: nowrap; }
.watermark { position: absolute; left: 497px; top: 5px; color: rgba(130,130,130,.55); font-family: "Open Sans", sans-serif; white-space: nowrap; }
.watermark strong, .watermark em { display: block; font-style: normal; font-weight: normal; }
.watermark strong { font-size: 24px; line-height: 34px; letter-spacing: 0; }
.watermark em { font-size: 18px; line-height: 25px; letter-spacing: -.54px; }

.taskbar { height: 50px; flex: none; background: #20252b; color: #fff; display: flex; font-family: "Open Sans", sans-serif; }
.start { width: 60px; display: grid; place-items: center; }
.start svg { width: 20px; height: 20px; }
.search { width: 430px; background: #f2f2f2; border: 1px solid #bbb; border-width: 1px 0 1px 1px; display: flex; align-items: center; color: #333; font-size: 19px; letter-spacing: -.55px; padding-left: 14px; }
.search span { margin-left: 15px; width: 283px; white-space: nowrap; }
.glass { width: 20px; height: 20px; }
.lab { width: 97px; height: 48px; margin-left: auto; }
.apps { display: flex; }
.apps i { width: 61.8px; display: grid; place-items: center; }
.apps svg { width: 29px; height: 29px; }
.run { background: linear-gradient(#76b9ed, #76b9ed) center bottom / 51px 3px no-repeat; }
.active { background-color: #4b4f54; background-size: 100% 3px; }
.zed { font: bold 10px "Liberation Sans", sans-serif; fill: #fff; }
.tray { margin-left: auto; display: flex; align-items: center; background: linear-gradient(90deg, #20252b, #302d2c 90px, #20252b 180px); padding-right: 20px; }
.w-cloud { width: 30px; height: 21px; margin-left: 20px; }
.weather { margin-left: 10px; width: 149px; font-size: 17.5px; letter-spacing: -.2px; white-space: nowrap; }
.trayicons { width: 170px; height: 30px; }
.date { width: 80px; margin-left: 8px; display: flex; flex-direction: column; align-items: center; font-size: 14.5px; line-height: 24px; letter-spacing: -.35px; }
.notif { width: 32px; height: 34px; margin: 8px 0 0 21px; }
.one { font: 16px "Open Sans", sans-serif; fill: #fff; }
```
